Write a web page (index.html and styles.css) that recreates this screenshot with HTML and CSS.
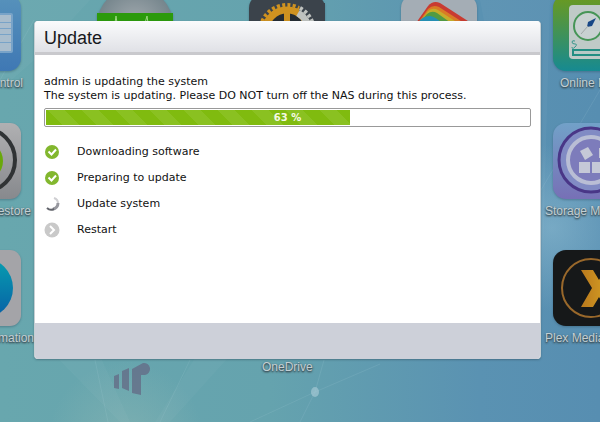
FILE: index.html
```html
<!DOCTYPE html>
<html lang="en">
<head>
<meta charset="utf-8">
<title>Update</title>
<link rel="stylesheet" href="styles.css">
</head>
<body>
<main class="desktop">
  <svg class="rays" viewBox="0 0 600 422" preserveAspectRatio="none" aria-hidden="true">
    <g fill="#fff">
      <path opacity=".03" d="M120 422L40 340 95 345 130 422zM0 0h90L34 60 0 90z"/>
      <path opacity=".03" d="M155 422L200 350 235 350 170 422zM480 0h70L541 330z"/>
    </g>
    <g fill="none" stroke="#bde0e5" opacity=".12">
      <path d="M250 422L315 392 380 364M300 422L315 392 324 360M108 422L95 360M0 80L34 20M160 422L190 360M541 190L600 90"/>
    </g>
    <ellipse cx="315" cy="392" rx="4" ry="5" fill="#b5d2dc" opacity=".55"/>
  </svg>

  <div class="app col-1 row-1">
    <svg class="tile" viewBox="0 0 76 76" aria-hidden="true">
      <defs><linearGradient id="blue" x2="0" y2="1"><stop stop-color="#5792bb"/><stop offset="1" stop-color="#3f78b4"/></linearGradient></defs>
      <rect width="76" height="76" rx="13" fill="url(#blue)"/>
      <rect x="12" y="18" width="56" height="40" rx="2" fill="#78a3c8"/>
      <path d="M14 20h52v7H14zM14 28h52v5H14zM14 34h52v5H14zM14 40h52v7H14zM14 48h52v8H14z" fill="#a9bdcd"/>
    </svg>
    <span class="label label-end label-end-1">Control</span>
  </div>
  <div class="app col-2 row-1">
    <svg class="tile" viewBox="0 0 76 76" aria-hidden="true">
      <defs><radialGradient id="dome"><stop stop-color="#a5acb1"/><stop offset="1" stop-color="#75858c"/></radialGradient></defs>
      <circle cx="38" cy="30" r="38" fill="url(#dome)"/>
      <path d="M0 18h76v40H0z" fill="#2c9a0c"/>
      <path d="M18 28l1-7 1 7M48 28l2-7 1 7" fill="none" stroke="#9bd780"/>
    </svg>
  </div>
  <div class="app col-3 row-1">
    <svg class="tile" viewBox="0 0 76 76" aria-hidden="true">
      <rect width="76" height="76" rx="13" fill="#3b434b"/>
      <circle cx="38" cy="37" r="27" fill="none" stroke="#cf9220" stroke-width="4" stroke-dasharray="3 2.300"/>
      <circle cx="38" cy="37" r="22" fill="#252c33" stroke="#cf9220" stroke-width="7"/>
      <path d="M51 8h25v30H64L50 16z" fill="#3b434b"/>
      <path d="M51 13a27 27 0 0 1 14 24" fill="none" stroke="#bfc2bf" stroke-width="4" stroke-dasharray="3 2.300"/>
      <path d="M49 18a22 22 0 0 1 11 19" fill="none" stroke="#bfc2bf" stroke-width="7"/>
      <path d="M35 16h6v20h-6z" fill="#cf9220"/>
    </svg>
  </div>
  <div class="app col-4 row-1">
    <svg class="tile" viewBox="0 0 76 76" aria-hidden="true">
      <rect width="76" height="76" rx="13" fill="#a4adb5"/>
      <path d="M15 28L27 11Q32 5 39 8L70 28z" fill="#c93b31"/>
      <path d="M17 28L27 14Q32 9 38 12L63 28z" fill="#d97b25"/>
      <path d="M18 28L27 16Q32 12 37 15L57 28z" fill="#c6ad2a"/>
      <path d="M18 28L26 19Q31 15 36 18L50 28z" fill="#529b43"/>
      <path d="M17 28Q21 21 29 21 35 22 41 28z" fill="#2490b5"/>
    </svg>
  </div>
  <div class="app col-5 row-1">
    <svg class="tile" viewBox="0 0 76 76" aria-hidden="true">
      <defs><linearGradient id="green" x2="0" y2="1"><stop stop-color="#6c9a1d"/><stop offset="1" stop-color="#168a91"/></linearGradient></defs>
      <rect width="76" height="76" rx="13" fill="url(#green)"/>
      <rect x="16" y="10" width="50" height="54" rx="4" fill="#bfcac7"/>
      <circle cx="35" cy="31" r="14" fill="#c8d1d1" stroke="#469557" stroke-width="2"/>
      <path d="M43 23l-8 4-1 5 5-1z" fill="#174786"/><path d="M28 39l7-8" stroke="#a1a8a8"/>
      <path d="M22 46q-3-1-3 1t3 2 0 3-3 0" fill="none" stroke="#38988d"/>
      <rect x="20" y="55" width="48" height="5" fill="#b8c9c6" stroke="#238e83" stroke-width="2"/>
    </svg>
    <span class="label label-start label-indent">Online M</span>
  </div>

  <div class="app col-1 row-2">
    <svg class="tile" viewBox="0 0 76 76" aria-hidden="true">
      <defs><linearGradient id="grey" x2="0" y2="1"><stop stop-color="#b0b0b2"/><stop offset="1" stop-color="#87898d"/></linearGradient></defs>
      <rect width="76" height="76" rx="11" fill="url(#grey)"/>
      <circle cx="38" cy="37" r="32" fill="none" stroke="#303335" stroke-width="4"/>
      <circle cx="38" cy="38" r="20" fill="#69a80b"/>
    </svg>
    <span class="label label-end label-end-2">Restore</span>
  </div>
  <div class="app col-5 row-2">
    <svg class="tile" viewBox="0 0 76 76" aria-hidden="true">
      <defs><linearGradient id="violet" x2="0" y2="1"><stop stop-color="#72a1c8"/><stop offset="1" stop-color="#7770b6"/></linearGradient></defs>
      <rect width="76" height="76" rx="13" fill="url(#violet)"/>
      <circle cx="38" cy="37" r="32" fill="#818bc4" stroke="#493687" stroke-width="3"/>
      <circle cx="38" cy="37" r="23" fill="#7d7cbb" stroke="#b9bed5" stroke-width="4"/>
      <path d="M27 28l8-4 5 8-8 5zM26 39h11v11H26zM39 39h11v11H39zM46 25h9v10h-9z" fill="#c5c8d7"/>
    </svg>
    <span class="label label-start">Storage Ma</span>
  </div>

  <div class="app col-1 row-3">
    <svg class="tile" viewBox="0 0 76 76" aria-hidden="true">
      <defs><linearGradient id="ball" x2="0" y2="1"><stop stop-color="#079fb0"/><stop offset="1" stop-color="#075fa6"/></linearGradient></defs>
      <rect width="76" height="76" rx="11" fill="#a4a4a8"/>
      <circle cx="38" cy="38" r="30" fill="url(#ball)"/>
    </svg>
    <span class="label label-end label-end-3">Information</span>
  </div>
  <div class="app col-5 row-3">
    <svg class="tile" viewBox="0 0 76 76" aria-hidden="true">
      <defs><linearGradient id="gold" x2="1"><stop stop-color="#b9791d"/><stop offset="1" stop-color="#d29a22"/></linearGradient></defs>
      <rect width="76" height="76" rx="13" fill="#161819"/>
      <circle cx="38" cy="38" r="29" fill="none" stroke="#99682b" stroke-width="2"/>
      <path d="M28 20H40L46 30 52 20V57L46 47 40 57H28L39 38z" fill="url(#gold)"/>
    </svg>
    <span class="label label-start">Plex Media</span>
  </div>
  <span class="label onedrive">OneDrive</span>
  <svg class="mark" viewBox="0 0 40 36" aria-hidden="true">
    <path d="M1 14l5-2v15l-5-1zM9 9l7-3v23l-7-3zM19 7L30 1a6 6 0 1 1 2 12H28v20l-9-2z" fill="#65718a"/>
  </svg>

  <section class="dialog" role="dialog" aria-labelledby="title">
    <header class="dialog-head"><h1 id="title">Update</h1></header>
    <div class="dialog-body">
      <p>admin is updating the system</p>
      <p>The system is updating. Please DO NOT turn off the NAS during this process.</p>
      <div class="progress" role="progressbar" aria-valuenow="63" aria-valuemin="0" aria-valuemax="100" aria-label="Update progress">
        <div class="fill" style="width:63%"></div>
        <span class="percent">63 %</span>
      </div>
      <ul class="steps">
        <li><svg viewBox="0 0 16 16" aria-hidden="true"><circle cx="8" cy="8" r="7" fill="#82b72e"/><path d="M4.500 7.500l3 3 4.500-5" fill="none" stroke="#fff" stroke-width="2"/></svg>Downloading software</li>
        <li><svg viewBox="0 0 16 16" aria-hidden="true"><circle cx="8" cy="8" r="7" fill="#82b72e"/><path d="M4.500 7.500l3 3 4.500-5" fill="none" stroke="#fff" stroke-width="2"/></svg>Preparing to update</li>
        <li><svg viewBox="0 0 16 16" aria-hidden="true"><g fill="none"><path d="M10 2A6 6 0 0 1 14 8" stroke="#cfcfd2" stroke-width="2"/><path d="M14 7A6 6 0 0 1 9 13" stroke="#97989f" stroke-width="3"/><path d="M10 13A6 6 0 0 1 3 12" stroke="#62646b" stroke-width="2"/></g></svg>Update system</li>
        <li><svg viewBox="0 0 16 16" aria-hidden="true"><circle cx="8" cy="8" r="7.500" fill="#c9c9c9"/><path d="M6 4l4 4-4 4" fill="none" stroke="#fff" stroke-width="2"/></svg>Restart</li>
      </ul>
    </div>
    <footer class="dialog-foot"></footer>
  </section>
</main>
</body>
</html>
```
FILE: styles.css
```css
* { box-sizing: border-box; }
body { margin: 0; }
h1, p, ul { margin: 0; padding: 0; }

.desktop {
  position: relative;
  min-height: 100vh;
  overflow: hidden;
  background:
    radial-gradient(circle at 92% 54%, rgba(150, 195, 215, .5), transparent 14%),
    radial-gradient(circle at 21% 104%, rgba(145, 185, 180, .5), transparent 12%),
    linear-gradient(90deg, #68a7ae 0%, #65a3ae 45%, #5a92b2 80%, #578eb1 100%);
  font-family: "Liberation Sans", Arial, sans-serif;
}
.rays { position: absolute; inset: 0; width: 100%; height: 100%; }

/* Icons placed freely on the desktop */
.app { position: absolute; width: 76px; }
.col-1 { left: -55px; }
.col-2 { left: 97px; }
.col-3 { left: 249px; }
.col-4 { left: 401px; }
.col-5 { left: 553px; }
.row-1 { top: -5px; }
.row-2 { top: 123px; }
.row-3 { top: 250px; }
.tile {
  display: block;
  width: 76px;
  height: 76px;
  filter: drop-shadow(0 1px 1px rgba(40, 70, 90, .4));
}
.label {
  position: absolute;
  top: 80px;
  font-size: 12px;
  line-height: 16px;
  white-space: nowrap;
  color: #c3cfd3;
  text-shadow: 0 1px 2px #34464e, 0 1px 2px #44565e;
}
.label-end-1 { right: -2px; }
.label-end-2 { right: -10px; }
.label-end-3 { right: -13px; }
.label-start { left: -8px; }
.label-indent { left: 7px; }
.onedrive { left: 262px; top: 359px; }
.mark { position: absolute; left: 113px; top: 362px; width: 40px; height: 36px; opacity: .85; }

.dialog {
  position: relative;
  margin: 21px 59px 0 34px;
  border-radius: 4px;
  overflow: hidden;
  background: #fff;
  border: solid #c6cfd3;
  border-width: 0 1px;
  box-shadow: 0 1px 2px rgba(50, 80, 95, .5);
}
.dialog-head {
  padding: 6px 9px 3px;
  background: linear-gradient(#fafbfc, #e0e1e6);
  border-bottom: 3px solid #c9c9cd;
}
.dialog-head h1 {
  font-size: 18px;
  line-height: 22px;
  font-weight: 400;
  color: #16181c;
}
.dialog-body {
  min-height: 268px;
  padding: 20px 9px;
  font-family: Verdana, "DejaVu Sans", sans-serif;
  font-size: 11px;
  line-height: 14px;
  color: #111;
}
.progress {
  position: relative;
  height: 19px;
  margin-top: 5px;
  padding: 1px;
  border: 1px solid #999;
  border-radius: 2px;
}
.fill {
  height: 15px;
  background: repeating-linear-gradient(45deg, #80bb0f 0 12px, #8ac121 12px 24px);
}
.percent {
  position: absolute;
  inset: 0;
  font-size: 10px;
  line-height: 18px;
  font-weight: 700;
  text-align: center;
  color: #f4f9e4;
}
.steps { margin-top: 12px; list-style: none; }
.steps li {
  display: flex;
  align-items: center;
  gap: 17px;
  height: 26px;
}
.steps svg { width: 16px; height: 16px; }
.dialog-foot { height: 36px; background: #cdd0d9; }
```
